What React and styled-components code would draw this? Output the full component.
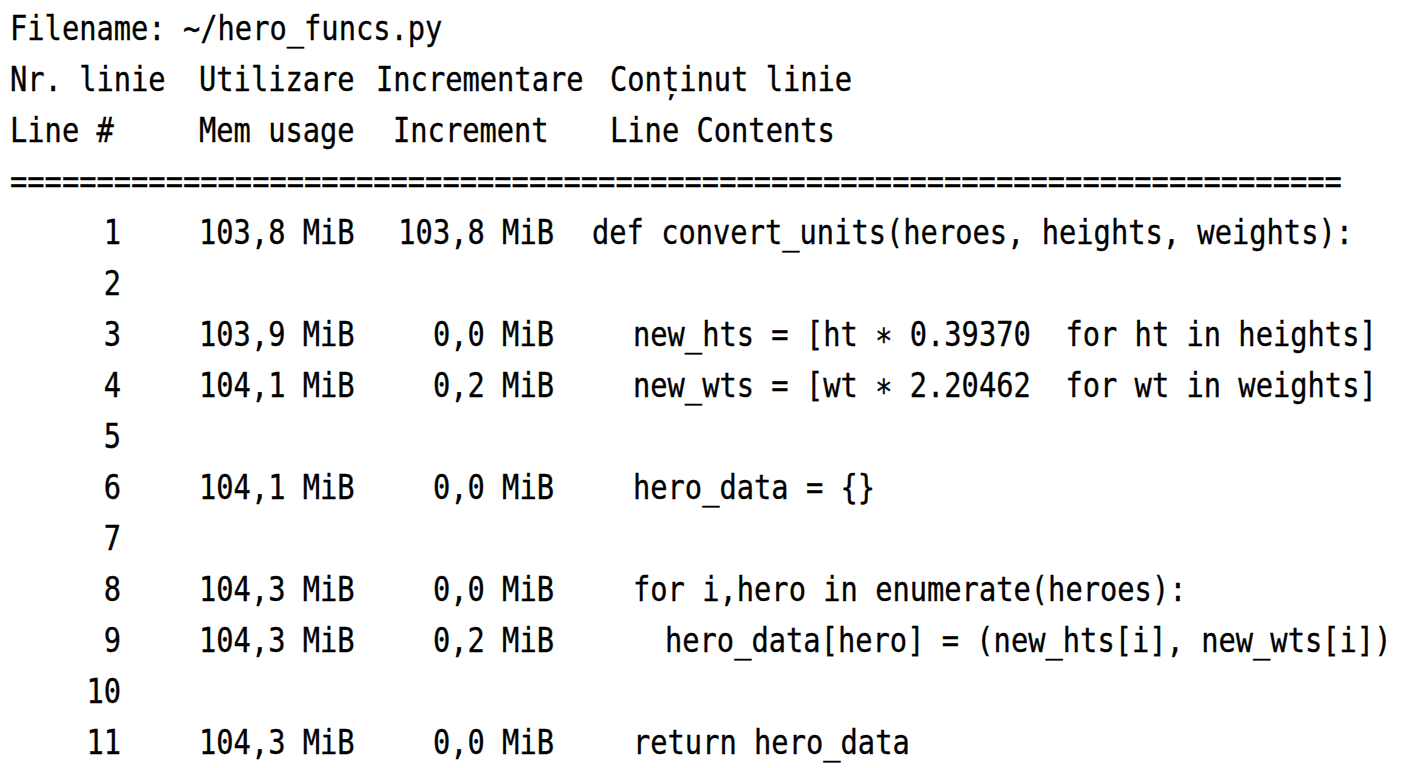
import React from "react";
import styled, { createGlobalStyle } from "styled-components";

// The reference glyphs are a tall, narrow monospace: DejaVu Sans Mono at 34px,
// squeezed horizontally so one character cell is ~17.3px wide.
const SX = 0.845;
const u = (n) => `${(n / SX).toFixed(2)}px`;

const Global = createGlobalStyle`
  html, body {
    margin: 0;
    padding: 0;
    background: #ffffff;
    overflow: hidden;
  }
`;

const Screen = styled.main`
  width: 1408px;
  height: 768px;
  overflow: hidden;
  background: #ffffff;
`;

const Output = styled.div`
  box-sizing: border-box;
  width: ${u(1408)};
  padding: 3px 0 0 ${u(10)};
  transform: scaleX(${SX});
  transform-origin: 0 0;
  display: flex;
  flex-direction: column;
  font-family: "DejaVu Sans Mono", "Liberation Mono", monospace;
  font-size: 34px;
  line-height: 51px;
  color: #000000;
  -webkit-text-stroke: 0.35px #000000;
  white-space: pre;
`;

const Line = styled.div`
  height: 51px;
`;

const TableRow = styled.div`
  display: grid;
  grid-template-columns: ${u(188)} ${u(177)} ${u(216)} 1fr;
  height: 51px;
`;

const Cell = styled.span`
  padding-left: ${(p) => u(p.$pad || 0)};
`;

const LineNo = styled.span`
  text-align: right;
  padding-right: ${u(77)};
`;

const Amount = styled.span`
  text-align: right;
  padding-right: ${u(37)};
`;

const Code = styled.span`
  padding-left: ${(p) => u(p.$indent || 0)};
`;

const INDENT = [1, 42, 74];

const rows = [
  { n: 1, mem: "103,8 MiB", inc: "103,8 MiB", code: "def convert_units(heroes, heights, weights):", level: 0 },
  { n: 2 },
  { n: 3, mem: "103,9 MiB", inc: "0,0 MiB", code: "new_hts = [ht \u2217 0.39370  for ht in heights]", level: 1 },
  { n: 4, mem: "104,1 MiB", inc: "0,2 MiB", code: "new_wts = [wt \u2217 2.20462  for wt in weights]", level: 1 },
  { n: 5 },
  { n: 6, mem: "104,1 MiB", inc: "0,0 MiB", code: "hero_data = {}", level: 1 },
  { n: 7 },
  { n: 8, mem: "104,3 MiB", inc: "0,0 MiB", code: "for i,hero in enumerate(heroes):", level: 1 },
  { n: 9, mem: "104,3 MiB", inc: "0,2 MiB", code: "hero_data[hero] = (new_hts[i], new_wts[i])", level: 2 },
  { n: 10 },
  { n: 11, mem: "104,3 MiB", inc: "0,0 MiB", code: "return hero_data", level: 1 },
];

export default function App() {
  return (
    <Screen>
      <Global />
      <Output>
        <Line>Filename: ~/hero_funcs.py</Line>
        <TableRow>
          <Cell>Nr. linie</Cell>
          <Cell $pad={1}>Utilizare</Cell>
          <Cell $pad={1}>Incrementare</Cell>
          <Cell $pad={19}>Conținut linie</Cell>
        </TableRow>
        <TableRow>
          <Cell>Line #</Cell>
          <Cell $pad={1}>Mem usage</Cell>
          <Cell $pad={18}>Increment</Cell>
          <Cell $pad={19}>Line Contents</Cell>
        </TableRow>
        <Line>{"=".repeat(77)}</Line>
        {rows.map((r) => (
          <TableRow key={r.n}>
            <LineNo>{r.n}</LineNo>
            <Cell $pad={1}>{r.mem || ""}</Cell>
            <Amount>{r.inc || ""}</Amount>
            <Code $indent={INDENT[r.level || 0]}>{r.code || ""}</Code>
          </TableRow>
        ))}
      </Output>
    </Screen>
  );
}
